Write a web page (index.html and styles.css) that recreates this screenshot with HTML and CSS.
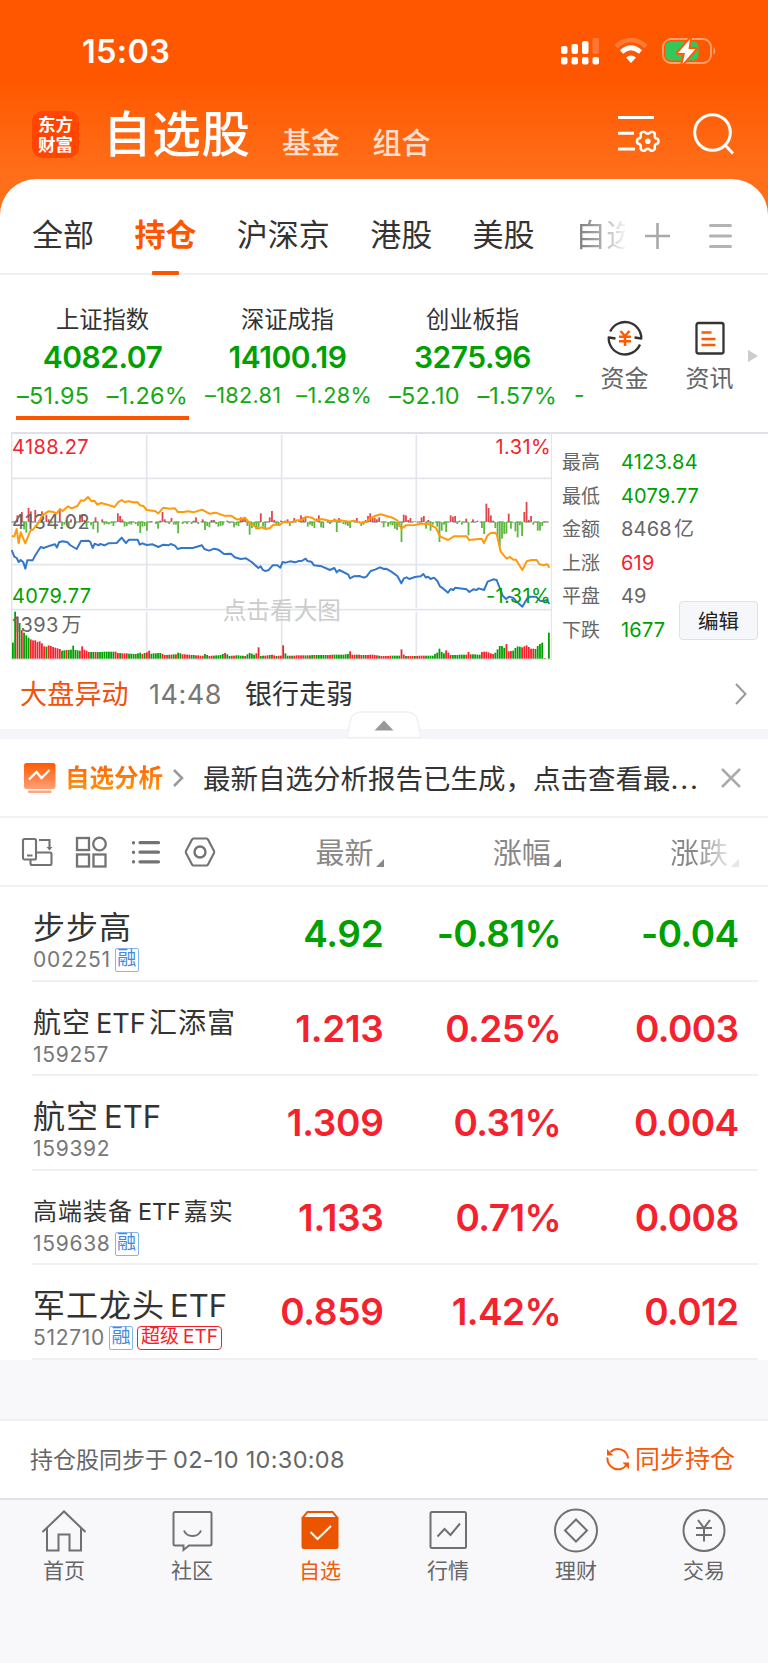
FILE: index.html
```
<!DOCTYPE html>
<html lang="zh-CN"><head><meta charset="UTF-8">
<title>自选股</title>
<link rel="stylesheet" href="styles.css">
</head>
<body>
<div class="head">
<div class="status">
<div class="clock">15:03</div>
<svg class="signal" width="39" height="28" viewBox="0 0 39 28" fill="#fff">
<rect x="0" y="9" width="6.5" height="8" rx="2"/><rect x="10.5" y="7" width="6.5" height="10" rx="2"/><rect x="21" y="4" width="6.5" height="13" rx="2"/><rect x="31.5" y="1" width="6.5" height="16" rx="2" opacity=".2"/>
<rect x="0" y="20" width="6.5" height="7.5" rx="2"/><rect x="10.5" y="20" width="6.5" height="7.5" rx="2"/><rect x="21" y="20" width="6.5" height="7.5" rx="2"/><rect x="31.5" y="20" width="6.5" height="7.5" rx="2"/>
</svg>
<svg class="wifi" width="34" height="26" viewBox="0 0 34 26" fill="none" stroke="#fff">
<path d="M2 8.5Q17 -4.5 32 8.5" stroke-width="4.5" opacity=".22"/>
<path d="M7.5 14Q17 5.5 26.5 14" stroke-width="4.6"/>
<path d="M12 19.500Q17 15.500 22 19.500L17 25Z" fill="#fff" stroke="none"/>
</svg>
<svg class="battery" width="54" height="28" viewBox="0 0 54 28">
<rect x="1" y="2" width="48" height="24" rx="8" fill="none" stroke="#fff" stroke-width="1.8" opacity=".45"/>
<path d="M51.500 10Q55 14 51.500 18Z" fill="#fff" opacity=".5"/>
<rect x="3.5" y="4.5" width="33" height="19" rx="5" fill="#34c759"/>
<path d="M28 2L16 16H23L20.500 27L33.500 12H26.500Z" fill="#fff" stroke="#ff5a04" stroke-width="4" paint-order="stroke" stroke-linejoin="round"/>
</svg>
</div>
<div class="titlebar">
<div class="logo">东方<br>财富</div>
<div class="title">自选股</div>
<div class="sub">基金</div>
<div class="sub">组合</div>
<svg class="ico_set" width="42" height="40" viewBox="0 0 42 40" fill="none" stroke="#fff" stroke-width="3">
<path d="M0 3.500H36M0 19.300H16M0 35H17"/>
<path d="M24.500 18Q26.500 17 28 19Q29.800 20.500 31.600 19Q33 17 35 18Q37.500 19 36.700 21.500Q36.500 24 38.500 24.500Q40.500 25 40.500 27.200Q40.500 29.500 38.500 30Q36.500 30.500 36.700 33Q37.500 35.500 35 36.500Q33 37.500 31.600 35.500Q29.800 34 28 35.500Q26.500 37.500 24.500 36.500Q22 35.500 22.800 33Q23 30.500 21 30Q19 29.500 19 27.200Q19 25 21 24.500Q23 24 22.800 21.500Q22 19 24.500 18Z" stroke-width="2.5" stroke-linejoin="round"/>
<circle cx="29.8" cy="27.2" r="2.8" fill="#fff" stroke="none"/>
</svg>
<svg class="ico_search" width="42" height="42" viewBox="0 0 42 42" fill="none" stroke="#fff" stroke-width="3">
<circle cx="19.5" cy="19.5" r="17.8"/><path d="M32 32L40 40.500"/>
</svg>
</div>
</div>

<div class="panel">
<div class="tabs">
<div>全部</div><div class="on">持仓</div><div>沪深京</div><div>港股</div><div>美股</div><div class="fade">自选</div>
<svg class="plus" width="25" height="26" viewBox="0 0 25 26" stroke="#aaa" stroke-width="2.6"><path d="M0 13H25M12.500 0V26"/></svg>
<svg class="menu" width="23" height="26" viewBox="0 0 23 26" stroke="#b3b3b3" stroke-width="3" stroke-linecap="round"><path d="M1.500 2.500H21.500M1.500 13H21.500M1.500 23.500H21.500"/></svg>
</div>

<div class="indices">
<div class="ix cur"><p>上证指数</p><b>4082.07</b><span><i>–51.95</i><i>–1.26%</i></span></div>
<div class="ix sm"><p>深证成指</p><b>14100.19</b><span><i>–182.81</i><i>–1.28%</i></span></div>
<div class="ix cy"><p>创业板指</p><b>3275.96</b><span><i>–52.10</i><i>–1.57%</i></span></div>
<div class="more">-</div>
<div class="tool">
<svg width="36" height="36" viewBox="0 0 36 36" fill="none" stroke="#333" stroke-width="2.3" stroke-linejoin="round">
<path d="M3.200 11.500A16.300 16.300 0 0 1 34.300 18.500L27.500 17.500M33 24.500A16.300 16.300 0 0 1 1.700 17.500L8.500 18.500"/>
<path d="M13.500 11L18 16L22.500 11M12 16.700H24M12 21.200H24M18 16V26" stroke="#ff5a00" stroke-width="2.5"/>
</svg>资金</div>
<div class="tool">
<svg width="36" height="36" viewBox="0 0 36 36" fill="none" stroke="#333" stroke-width="2.3">
<rect x="4.5" y="3" width="27" height="30.5" rx="2"/>
<path d="M9.500 12.500H19.500M9.500 19H23.500M9.500 25H23.500" stroke="#ff5a00" stroke-width="2.7"/>
</svg>资讯</div>
<div class="tri"></div>
</div>

<div class="market">
<svg id="chart" width="541" height="228" viewBox="33 21 1623 684">
<g stroke="#e3e5ec" fill="none" stroke-width="5">
<path d="M35 21V703H1655V21M35 160H1655M35 419H1655M35 554H1655"/>
<path d="M440 30V548M440 560V703M845 30V548M845 560V703M1249 30V548M1249 560V703"/>
</g>
<path d="M35 291H1655" stroke="#999" stroke-width="4" stroke-dasharray="18 9"/>
<text class="mark" x="668" y="582">点击看大图</text>
<g id="bars"></g>
<g class="lbl">
<text x="36" y="86" fill="#f5222d">4188.27</text>
<text x="36" y="311" fill="#666">4134.02</text>
<text x="36" y="534" fill="#00a000">4079.77</text>
<text x="36" y="620" fill="#666">1393<tspan dx="8">万</tspan></text>
<text x="1653" y="86" fill="#f5222d" text-anchor="end">1.31%</text>
</g>
<polyline stroke="#ff9a0a" points="35,334 43,334 50,312 56,355 62,322 76,355 92,315 98,315 118,290 126,272 145,259 160,261 170,266 180,252 188,258 204,244 215,250 232,243 243,226 252,227 264,216 275,229 283,227 292,239 303,234 325,240 344,246 354,232 365,225 374,231 386,229 400,232 413,232 420,241 430,243 440,255 465,258 475,265 490,248 508,251 525,250 533,261 550,261 565,259 580,262 606,254 628,266 647,263 672,272 693,272 710,283 722,283 735,278 748,294 775,311 785,307 797,312 810,309 820,299 840,299 850,291 870,292 890,286 904,286 918,275 936,278 950,288 965,282 990,288 1020,286 1048,290 1060,287 1080,293 1097,291 1110,281 1125,273 1142,268 1160,273 1180,279 1192,287 1204,311 1218,301 1245,300 1262,296 1278,296 1290,299 1308,309 1320,334 1344,345 1362,334 1400,334 1407,345 1445,341 1452,354 1462,332 1472,324 1485,323 1491,330 1502,380 1520,401 1530,396 1540,404 1548,404 1567,435 1580,409 1595,405 1610,405 1618,417 1630,421 1642,418 1648,428"/>
<polyline stroke="#3377c8" points="35,375 43,395 50,399 56,411 62,405 70,412 76,431 82,406 98,406 104,394 122,366 131,369 150,362 165,358 171,367 177,352 188,349 203,352 210,360 230,372 243,348 265,347 271,351 278,369 284,356 296,361 300,357 314,361 325,355 350,354 365,338 378,354 387,344 413,344 419,359 427,355 440,360 458,358 475,366 490,359 505,361 512,357 525,362 533,372 544,369 578,369 606,361 613,372 627,377 643,371 655,374 672,387 693,386 704,397 722,402 738,400 755,411 775,429 782,424 788,434 795,438 805,436 818,421 832,421 841,428 848,411 857,413 870,409 885,412 897,408 905,408 917,401 922,408 934,410 942,421 965,424 990,435 1003,429 1010,442 1018,435 1045,449 1050,460 1061,454 1078,453 1092,458 1100,454 1112,438 1125,434 1140,427 1152,432 1158,431 1174,440 1192,453 1204,475 1212,460 1220,457 1228,462 1245,456 1262,454 1270,447 1278,458 1284,455 1292,462 1302,458 1312,468 1320,484 1330,491 1344,503 1352,492 1360,495 1366,488 1400,493 1408,501 1420,493 1430,495 1436,490 1452,495 1463,470 1480,463 1490,465 1508,512 1518,522 1528,515 1540,519 1548,528 1567,545 1582,520 1590,515 1608,515 1620,527 1630,529 1640,525 1648,537"/>
<g class="lbl"><text x="1653" y="534" fill="#00a000" text-anchor="end">-1.31%</text></g>
</svg>
<div class="stat">
<div><span>最高</span><span class="g">4123.84</span></div>
<div><span>最低</span><span class="g">4079.77</span></div>
<div><span>金额</span><span>8468<em>亿</em></span></div>
<div><span>上涨</span><span class="r">619</span></div>
<div><span>平盘</span><span>49</span></div>
<div><span>下跌</span><span class="g">1677</span></div>
<button type="button">编辑</button>
</div>
</div>

<div class="news">
<span class="o">大盘异动</span><span class="t">14:48</span><span>银行走弱</span>
<svg width="12" height="22" viewBox="0 0 12 22" fill="none" stroke="#999" stroke-width="2"><path d="M1 1L10.500 11L1 21"/></svg>
</div>
<div class="band">
<svg width="76" height="28" viewBox="0 0 76 28"><path d="M1 26.500L4.500 9Q6.500 1 16 1H60Q69.500 1 71.500 9L75 26.500Z" fill="#fff" stroke="#eff0f2" stroke-width="1.5"/><path d="M38 9.500L47.500 19.500H28.500Z" fill="#999"/></svg>
</div>

<div class="report">
<svg width="32" height="32" viewBox="0 0 32 32"><defs><linearGradient id="og" x1="0" y1="0" x2="0" y2="1"><stop offset="0" stop-color="#ff5a00"/><stop offset="1" stop-color="#ffa078"/></linearGradient></defs>
<rect x="0" y="1" width="31.5" height="26" rx="2.5" fill="url(#og)"/><rect x="4" y="28.5" width="23.5" height="2.5" rx="1" fill="#ffa580"/>
<path d="M5 17.500L12.500 10L17.500 16L25.500 8" fill="none" stroke="#fff" stroke-width="2.4"/></svg>
<span class="name">自选分析</span>
<svg class="arr" width="11" height="18" viewBox="0 0 11 18" fill="none" stroke="#999" stroke-width="2.5"><path d="M1 1L9 9L1 17"/></svg>
<span class="msg">最新自选分析报告已生成，点击查看最<em>...</em></span>
<svg width="20" height="20" viewBox="0 0 20 20" stroke="#aaa" stroke-width="2.5"><path d="M1 1L19 19M19 1L1 19"/></svg>
</div>

<div class="cols">
<div class="icons">
<svg width="32" height="32" viewBox="0 0 32 32" fill="none" stroke="#737373" stroke-width="2.1"><rect x="2" y="3" width="13" height="20.5" rx="1.5"/><path d="M6 19.500H11.500M18 4H28.500V13M9.500 24V27.500Q9.500 29 11 29H29Q30.500 29 30.500 27.500V18Q30.500 16.500 29 16.500H16"/><path d="M25.500 11H31.500L28.500 14.500Z" fill="#737373" stroke="none"/></svg>
<svg width="32" height="32" viewBox="0 0 32 32" fill="none" stroke="#737373" stroke-width="2.3"><rect x="2" y="2" width="12" height="12"/><circle cx="24.5" cy="8" r="6.3"/><rect x="2" y="18.5" width="12" height="12"/><rect x="18.5" y="18.5" width="12" height="12"/></svg>
<svg width="32" height="32" viewBox="0 0 32 32" fill="none" stroke="#737373" stroke-width="3.2" stroke-linecap="round"><path d="M3.500 6.500V7M3.500 16V16.500M3.500 25.500V26M10 6.700H28.500M10 16.200H28.500M10 25.800H28.500"/></svg>
<svg width="32" height="32" viewBox="0 0 32 32" fill="none" stroke="#737373" stroke-width="2.1"><path d="M9.500 2.500H22.500Q23.500 2.500 24 3.500L30 15Q30.500 16 30 17L24 28.500Q23.500 29.500 22.500 29.500H9.500Q8.500 29.500 8 28.500L2 17Q1.500 16 2 15L8 3.500Q8.500 2.500 9.500 2.500Z"/><circle cx="16" cy="16" r="5.5" stroke-width="2.4"/></svg>
</div>
<div class="c1">最新</div><div class="c2">涨幅</div><div class="c3">涨跌</div>
</div>

<div class="list">
<div class="row green"><div class="nm"><p>步步高</p><div><span>002251</span><u>融</u></div></div><b>4.92</b><b>-0.81%</b><b>-0.04</b></div>
<div class="row"><div class="nm"><p class="m">航空<em>ETF</em>汇添富</p><div><span>159257</span></div></div><b>1.213</b><b>0.25%</b><b>0.003</b></div>
<div class="row"><div class="nm"><p>航空<em>ETF</em></p><div><span>159392</span></div></div><b>1.309</b><b>0.31%</b><b>0.004</b></div>
<div class="row"><div class="nm"><p class="s">高端装备<em>ETF</em>嘉实</p><div><span>159638</span><u>融</u></div></div><b>1.133</b><b>0.71%</b><b>0.008</b></div>
<div class="row"><div class="nm"><p>军工龙头<em>ETF</em></p><div><span>512710</span><u>融</u><u class="sup">超级<em>ETF</em></u></div></div><b>0.859</b><b>1.42%</b><b>0.012</b></div>
</div>
</div>

<div class="blank"></div>
<div class="sync"><span>持仓股同步于<em>02-10 10:30:08</em></span>
<div><svg width="24" height="24" viewBox="0 0 24 24" fill="none" stroke="#f55a0a" stroke-width="2"><path d="M4.500 5A10.300 10.300 0 0 1 22 11.500M1.500 10.500A10.500 10.500 0 0 0 8 21.500M8 21.500A10.300 10.300 0 0 0 20.500 18"/><path d="M1 2V8.500H7.500ZM23 22V15.500H16.500Z" fill="#f55a0a" stroke="none"/></svg>同步持仓</div></div>

<div class="nav">
<div><svg width="46" height="46" viewBox="0 0 46 46"><path d="M1.500 24L23 3.500L44.500 24M6 20V42.500H17.500V26.500H28.500V42.500H40V20"/></svg>首页</div>
<div><svg width="46" height="46" viewBox="0 0 46 46"><path d="M6 4H41Q42.500 4 42.500 5.500V36Q42.500 37.500 41 37.500H20L14.500 42V37.500H6Q4.500 37.500 4.500 36V5.500Q4.500 4 6 4Z"/><path d="M15 22.500Q17 28 23.500 28Q30 28 32 22.500"/></svg>社区</div>
<div class="on"><svg width="46" height="46" viewBox="0 0 46 46"><path d="M10 3H36L41.500 9.500V38.500Q41.500 41 39 41H7Q4.500 41 4.500 38.500V9.500Z" fill="#eb5500" stroke="none"/><path d="M11 5H35L38.500 9H7.500Z" fill="#fff" stroke="none"/><path d="M13.500 24L20.500 31L34 18" stroke="#fff"/></svg>自选</div>
<div><svg width="46" height="46" viewBox="0 0 46 46"><rect x="5.5" y="4" width="35.5" height="36" rx="1.5"/><path d="M12.500 28.500L19.500 21L25.500 27L35 15.500"/></svg>行情</div>
<div><svg width="46" height="46" viewBox="0 0 46 46"><circle cx="23" cy="22.5" r="21"/><path d="M23 11.500L34 22.500L23 33.500L12 22.500Z"/></svg>理财</div>
<div><svg width="46" height="46" viewBox="0 0 46 46"><circle cx="23" cy="22.5" r="20.5"/><path d="M17 12L23 20L29 12M15 20H31M15 27H31M23 20V33.500"/></svg>交易</div>
</div>
<script src="chart.js"></script>
</body>
</html>
```

FILE: styles.css
```
*{box-sizing:border-box;}
body{margin:0;width:768px;height:1663px;overflow:hidden;font:24px Inter,"Noto Sans CJK SC",sans-serif;color:#333;background:#f8f8fb;}
p{margin:0;}
i,em{font-style:normal;}
svg{display:block;flex:none;}
.g{color:#00a000;}
.r{color:#f5222d;}
.head{height:222px;background:linear-gradient(to bottom,#ff5700 0,#ff5700 78px,#ff6f1a 175px);}
.status{display:flex;height:102px;padding:0 52px 0 82px;}
.clock{margin-top:32px;width:479px;font-size:32.5px;font-weight:600;line-height:40px;letter-spacing:.3px;color:#fff;}
.signal{margin-top:37px;}
.wifi{margin:38px 0 0 14px;}
.battery{margin:37px 0 0 14px;}
.titlebar{display:flex;padding-left:32px;color:#fff;}
.logo{width:47px;height:47px;margin-top:9px;padding-top:3px;border-radius:11px;background:#ff4500;font:bold 17.5px/19.5px "Noto Sans CJK SC",sans-serif;text-align:center;}
.title{margin:-1px 0 0 24px;width:175px;font-size:48.5px;font-weight:500;line-height:68px;letter-spacing:.7px;}
.sub{width:90.5px;margin-top:20px;font-size:29px;line-height:44px;color:#ffe0d0;font-weight:500;}
.sub:nth-child(3){margin-left:4px;}
.ico_set{margin:12px 0 0 155px;}
.ico_search{margin:11px 0 0 33px;}
.panel{margin-top:-43px;background:#fff;border-radius:36px 36px 0 0;}
.tabs{display:flex;height:96px;padding:31px 0 0 32px;border-bottom:2px solid #f0f0f2;font-size:31px;line-height:50px;}
.tabs div{margin-right:40.4px;position:relative;white-space:nowrap;}
.tabs .on{color:#ff5500;font-weight:600;}
.on:after{content:"";position:absolute;left:18px;bottom:-2px;width:27px;height:4px;border-radius:1px;background:#ff5500;}
.nav .on:after{display:none;}
.tabs .fade{width:50px;overflow:hidden;margin-right:20px;color:transparent;background:linear-gradient(to right,#777 0,#aaa 50%,#f4f4f4 100%);background-clip:text;-webkit-background-clip:text;}
.plus{margin-top:13px;}
.menu{margin:13px 0 0 39px;}
.indices{display:flex;height:157px;padding-left:10px;}
.ix{width:185px;padding-top:29px;text-align:center;position:relative;}
.ix p{font-size:23.3px;line-height:32px;}
.ix b{display:block;font-size:30px;font-weight:600;line-height:42px;color:#00a000;letter-spacing:-.5px;}
.ix span{display:flex;justify-content:space-between;padding:0 7px;font-size:23.5px;line-height:35px;color:#16a916;letter-spacing:.2px;}
.ix.sm span{padding:0 8px 0 10px;font-size:21.7px;letter-spacing:.3px;}
.ix.cy span{padding:0 8px 0 9px;}
.cur:after{content:"";position:absolute;left:6px;top:141px;width:173px;height:4px;background:#ff5500;}
.more{width:17px;padding:103px 0 0 9px;line-height:35px;font-size:23px;color:#16a916;}
.tool{width:85px;padding-top:45px;font-size:24px;line-height:36px;text-align:center;color:#666;}
.tool svg{margin:0 auto 5px;overflow:visible;}
.tri{margin:75px 0 0 -4px;width:0;height:0;border:6.5px solid transparent;border-left:10px solid #ccc;border-right:0;}
.market{display:flex;margin-left:11px;border-top:2px solid #dfe0e8;height:229px;}
#chart{margin-top:-2px;}
#chart polyline{fill:none;stroke-width:6;stroke-linejoin:round;}
.lbl text{font-size:60px;letter-spacing:1.2px;}
.mark{font-size:71px;fill:#ccc;}
.stat{position:relative;width:216px;padding:12px 0 0 10px;font-size:19px;line-height:33.5px;color:#666;}
.stat>div{display:flex;}
.stat span{width:59px;white-space:nowrap;}
.stat span+span{width:auto;font-size:20px;letter-spacing:.2px;}
.stat em{margin-left:2px;}
.stat button{position:absolute;left:127px;top:167px;width:79px;height:39px;padding:0 0 2px;border:1.5px solid #dfe1e8;border-radius:4px;background:#f6f7fa;font:20.5px "Noto Sans CJK SC",sans-serif;color:#222;}
.news{display:flex;align-items:center;height:68px;padding:0 21px 1px 20px;font-size:27px;line-height:40px;}
.news .o{color:#f5500a;width:129px;letter-spacing:.2px;}
.news .t{color:#777;width:96px;letter-spacing:.5px;}
.news svg{margin-left:auto;margin-top:-2px;}
.band{height:10px;background:#f5f6f9;}
.band svg{position:relative;top:-18px;margin:0 auto;}
.report{display:flex;align-items:center;height:79px;padding-left:24px;border-bottom:2px solid #f2f2f4;}
.name{margin:-2px 0 0 9px;width:100px;font-size:24.5px;font-weight:700;color:transparent;background:linear-gradient(#ff5a00,#ff9a10);background-clip:text;-webkit-background-clip:text;}
.arr{margin-left:8px;}
.msg{margin:-1px 0 0 19px;width:518px;font-size:27.5px;white-space:nowrap;}
.msg em{letter-spacing:1.8px;}
.cols{display:flex;height:69px;border-bottom:2px solid #f2f2f4;font-size:29px;line-height:71px;color:#888;}
.icons{display:flex;width:295px;padding:18px 0 0 20.5px;gap:22.5px;}
.c1,.c2,.c3{position:relative;width:177.3px;padding-left:20.5px;}
.c3{width:100px;color:transparent;background:linear-gradient(to right,#888 0,#888 45px,#fff 88px);background-clip:text;-webkit-background-clip:text;}
.c1:after,.c2:after,.c3:after{content:"";position:absolute;left:81px;top:41px;border:4px solid #888;border-left-color:transparent;border-top-color:transparent;}
.c3:after{opacity:.2;}
.list{padding-left:32px;}
.row{display:flex;height:94.5px;margin-right:10px;border-bottom:2px solid #f0f0f2;color:#f5222d;}
.row.green{color:#00a000;}
.nm{width:222px;padding:21px 0 0 1px;color:#333;white-space:nowrap;}
.nm p{height:40px;font-size:32px;line-height:40px;letter-spacing:1px;}
.nm p.m{font-size:28px;}
.nm p.s{font-size:24px;}
.nm p em{margin:0 3px 0 5px;letter-spacing:0;font-size:.97em;}
.nm div{display:flex;align-items:center;height:24px;}
.nm span{font-size:21px;line-height:24px;color:#777;letter-spacing:.7px;}
.nm u{height:24px;margin-left:4px;padding:0 1.5px;border:1.5px solid #85b5ee;border-radius:2px;font-size:19px;line-height:20px;color:#3f8ae0;text-decoration:none;}
.nm u.sup{border-color:#f5222d;border-radius:4px;color:#f5222d;padding:0 3px;}
.sup em{margin-left:4px;}
.row b{width:129.5px;text-align:right;font-size:37px;font-weight:600;line-height:94px;letter-spacing:-.3px;}
.row b+b{width:177.5px;letter-spacing:-.6px;}
.blank{height:59px;}
.sync{display:flex;justify-content:space-between;height:81px;padding:0 33px 0 30px;background:#fff;border-top:2px solid #eef0f3;border-bottom:2px solid #e2e3e6;font-size:23px;line-height:77px;color:#666;}
.sync em{margin-left:5px;font-size:23.5px;letter-spacing:.3px;}
.sync div{display:flex;align-items:center;gap:5px;font-size:25px;color:#f55a0a;}
.nav{display:flex;}
.nav div{width:128px;padding-top:8px;font-size:21px;line-height:34px;text-align:center;color:#666;}
.nav svg{margin:0 auto;fill:none;stroke:#707070;stroke-width:2;}
.nav .on{color:#f05a0a;}
```

FILE: chart.js
```
'use strict';
// signed bars around the middle line, [slot,height]
var mid=[[2,20],[4,30],[5,-22],[6,-32],[7,42],[8,32],[10,36],[11,-10],[13,32],[15,22],[16,8],[17,-4],[19,4],[21,38],[22,-12],[23,-8],[24,5],[25,-14],[26,8],[28,-6],[30,22],[31,18],[32,6],[33,-16],[35,-10],[36,-22],[37,14],[38,-32],[40,8],[41,-8],[42,-6],[43,-7],[44,-4],[45,-12],[47,26],[48,18],[49,8],[50,-14],[51,-12],[52,-6],[53,-8],[55,-6],[56,-12],[57,-33],[58,-14],[59,-12],[60,-26],[62,2],[64,-6],[65,-20],[66,4],[67,30],[68,8],[70,-6],[71,12],[72,-8],[73,-8],[74,-34],[76,-6],[78,-6],[79,2],[80,-6],[81,4],[82,14],[83,-6],[85,8],[86,-24],[87,-12],[88,-16],[89,6],[90,6],[91,-6],[92,-14],[93,-12],[94,-10],[96,4],[97,-4],[99,-16],[100,-10],[101,-12],[102,14],[103,12],[104,14],[105,-12],[106,-38],[107,-18],[108,-12],[109,-22],[110,-16],[111,26],[112,-14],[113,-18],[115,14],[116,33],[117,6],[118,-10],[119,-12],[120,4],[122,4],[123,8],[124,-12],[126,12],[128,6],[129,20],[130,14],[131,16],[132,-14],[133,-8],[134,-12],[135,-18],[136,10],[137,20],[138,-16],[139,-18],[141,2],[142,-6],[144,10],[145,-30],[146,12],[148,-6],[149,-8],[150,-12],[151,-18],[153,4],[154,12],[156,-12],[157,-8],[158,6],[159,18],[160,26],[161,12],[162,12],[163,8],[164,14],[166,-16],[168,-14],[169,-8],[170,-10],[171,-20],[172,-24],[173,-14],[174,-60],[175,22],[176,20],[177,6],[178,12],[180,2],[183,14],[184,18],[185,-20],[186,6],[187,-26],[188,-8],[190,-14],[191,-60],[192,-26],[193,-8],[194,-30],[196,20],[197,16],[198,18],[199,-6],[200,4],[201,-8],[203,10],[204,-40],[206,8],[208,4],[210,-18],[211,-36],[212,55],[213,42],[214,20],[215,4],[216,-18],[217,-46],[218,-74],[219,-50],[220,-36],[221,-35],[222,25],[223,-20],[224,-2],[225,-28],[226,-46],[227,-10],[228,-42],[229,30],[230,60],[231,6],[232,18],[233,-8],[235,-26],[236,-26],[237,-12],[238,2]];
// volume envelope, the slots between two entries are interpolated
var vol=[[0,48],[1,141],[2,127],[3,107],[4,86],[5,78],[6,70],[7,63],[8,58],[9,55],[10,55],[11,50],[12,52],[13,46],[14,37],[15,36],[16,40],[18,35],[21,29],[22,24],[26,27],[27,39],[28,26],[30,24],[31,37],[32,27],[34,20],[36,20],[46,21],[47,17],[55,14],[57,18],[58,14],[60,19],[61,24],[62,15],[66,17],[68,11],[73,13],[74,18],[76,13],[85,9],[86,14],[88,8],[93,11],[95,17],[97,8],[101,10],[104,8],[106,17],[108,12],[109,16],[110,34],[111,8],[114,10],[116,12],[118,8],[120,9],[121,40],[122,16],[123,9],[130,10],[138,11],[148,12],[150,14],[151,22],[152,12],[158,11],[161,12],[165,8],[173,9],[174,28],[175,12],[176,8],[188,9],[190,18],[191,30],[192,20],[193,16],[194,25],[196,11],[203,12],[204,20],[205,13],[209,12],[210,20],[212,21],[215,14],[216,18],[218,38],[219,38],[220,32],[221,44],[222,22],[224,24],[225,32],[226,37],[228,34],[230,40],[232,30],[234,29],[235,38],[236,44],[237,48],[238,2],[239,0],[240,78]];
var col='ggrgrgggrrrrrrrgrrrrrrggrgggggrrrrrggrggggggggrrgrrrggggggrgrrgggggrrrgrgrggrrrrggrrrrggrrgggggrggrrggggrggggrrggrrgrrgrrrggrgrrrrrgrggrgggggrrrgggggggrrrgrrgrrrrrrgrrrrrggggrrgrrrgrrrrgggggggggrrrggggggrrrggggrrrrrrgggggrrrggggrrrrrrggggrrg';
var out='';
function bar(n,y,h,c)
{
out+='<rect x="'+(36+n*6.7).toFixed(1)+'" y="'+y+'" width="5.4" height="'+h+'" fill="'+c+'"/>';
}
mid.forEach(function(m)
{
if(m[1]>0)bar(m[0],291-m[1],m[1],'#e0474c');
else bar(m[0],291,-m[1],'#5cb83c');
});
for(var k=0;k<vol.length;k++)
{
var a=vol[k],b=vol[k+1]||[a[0]+1,0];
for(var n=a[0];n<b[0];n++)
{
var h=Math.round(a[1]+(b[1]-a[1])*(n-a[0])/(b[0]-a[0]));
bar(n,701-h,h,col[n]=='r'?'#f5222d':'#00a000');
}
}
document.getElementById('bars').innerHTML=out;
```
